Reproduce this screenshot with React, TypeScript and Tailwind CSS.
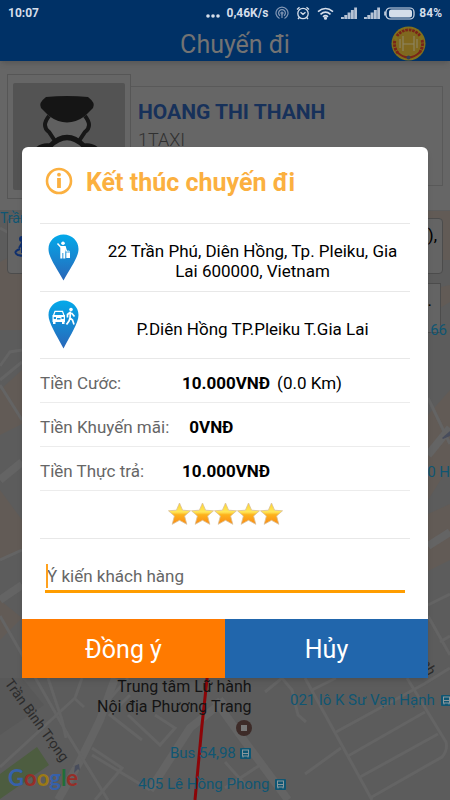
const streets = [
  "M0 616 L68 735 L108 800",
  "M0 767 L75 698 L82 678",
  "M48 678 L62 720 L66 738",
  "M92 755 L150 790 M92 748 L122 768 L95 800",
  "M74 698 L84 707",
  "M100 710 L128 678",
  "M142 740 L110 715 L130 695",
  "M155 715 L175 728 L160 745 L128 715",
  "M0 228 L22 240",
  "M0 366 L10 352 L22 350 M0 380 L22 362 M0 385 L22 420",
  "M0 560 L22 550",
  "M305 678 L372 800",
  "M312 690 L336 678",
  "M336 732 L424 684 L450 668",
  "M348 756 L425 712",
  "M360 777 L438 734",
  "M370 798 L442 757 Q448 750 446 742 L407 678",
  "M305 774 L341 748",
  "M265 692 L282 678 L292 690 L298 715 L306 722",
  "M225 762 L250 790 M225 788 L260 765",
  "M428 398 L450 444",
  "M428 605 L450 594",
  "M428 616 L450 655",
  "M440 642 L450 636",
];

const wideStreets = [
  "M115 678 L100 720 L78 765 L58 800",
  "M150 790 L190 728 L225 700",
  "M215 700 L240 735 L288 800",
  "M0 480 L22 462 M0 600 L22 585",
  "M428 455 L450 428",
  "M428 546 L450 532",
];

const MapCanvas = () => (
  <svg
    className="absolute inset-0 h-full w-full"
    viewBox="0 210 450 590"
    preserveAspectRatio="xMidYMax slice"
    aria-hidden="true"
  >
    <rect y="210" width="450" height="590" fill="#5c5c5c" />
    <path d="M0 262 L22 250 V330 H0 Z M0 390 L22 370 V424 L0 435 Z M0 490 L22 520 V550 L0 560 Z M0 600 L22 618 L0 640 Z" fill="#625b56" />
    <path d="M428 415 L450 390 V465 L428 500 Z M428 514 L450 504 V560 L428 571 Z M400 211 H450 V260 H428 Z M428 290 L450 285 V302 L428 315 Z" fill="#625b56" />
    <path d="M0 678 H22 L44 705 L0 735 Z" fill="#585858" />
    <path d="M0 774 L37 747 L49 765 L0 799 Z" fill="#4d5d40" />
    {wideStreets.map((d) => (
      <path key={d} d={d} stroke="#646464" strokeWidth="8" fill="none" />
    ))}
    {streets.map((d) => (
      <path key={d} d={d} stroke="#646464" strokeWidth="3" fill="none" />
    ))}
    <path d="M208 670 L202 725 L195 800" stroke="#8c0508" strokeWidth="3" fill="none" />
    <path d="M74 773 L75 766 L72 767 L79 764 L80 771 L78 769 Z M442 438 L450 431 V436 L443 439 Z" fill="#484d5c" />
  </svg>
);

const BusStop = () => (
  <svg className="shrink-0" width="11" height="11" viewBox="0 0 11 11" aria-hidden="true">
    <rect width="11" height="11" rx="1" fill="#0f5673" />
    <rect x="2.5" y="2" width="6" height="6" fill="#0f5673" stroke="#8a979c" />
    <path d="M3 5.5 H8 M3 8 V9.5 M8 8 V9.5" stroke="#8a979c" />
  </svg>
);

const SignalBars = () => (
  <svg width="16" height="12" viewBox="0 0 16 12" fill="#b6c3d5">
    <path d="M0 10 H2.9 V12 H0 Z M3.3 8 H6.2 V12 H3.3 Z M6.6 5.6 H9.5 V12 H6.6 Z M9.9 3 H12.8 V12 H9.9 Z M13.2 0.5 H16 V12 H13.2 Z" />
  </svg>
);

const StatusBar = () => (
  <div className="relative z-20 flex h-6 items-center bg-[#003166] pl-2 pr-2 pt-0.5 text-xs font-bold text-[#d5deea]">
    <span>10:07</span>
    <div className="ml-auto flex items-center gap-[7px]">
      <svg width="14" height="10" viewBox="0 0 14 10" fill="currentColor">
        <circle cx="2" cy="8" r="1.8" />
        <circle cx="7" cy="8" r="1.8" />
        <circle cx="12" cy="8" r="1.8" />
      </svg>
      <span>0,46K/s</span>
      <svg width="14" height="14" viewBox="0 0 14 14" fill="none" stroke="#8398b5" strokeWidth="1.2">
        <path d="M4.5 12.5 A6 6 0 1 1 9.5 12.5" />
        <path d="M5 9.8 A3.4 3.4 0 1 1 9 9.8" />
        <circle cx="7" cy="7" r="1" />
        <path d="M7 8 V12" />
      </svg>
      <svg width="14" height="14" viewBox="0 0 14 14" fill="none" stroke="currentColor" strokeWidth="1.3">
        <circle cx="7" cy="7.5" r="5.2" />
        <path d="M4.5 6.2 L7 8.3 L9.5 6.2 M1 3.5 L3.5 1.2 M13 3.5 L10.5 1.2 M3.3 11.5 L2 13 M10.7 11.5 L12 13" />
      </svg>
      <svg width="17" height="13" viewBox="0 0 17 13" fill="none" stroke="currentColor" strokeWidth="1.6">
        <path d="M1 4.7 Q8.5 -1.7 16 4.7 M3.5 7.3 Q8.5 3 13.5 7.3 M6 9.8 Q8.5 7.5 11 9.8" />
        <circle cx="8.5" cy="11.2" r=".8" />
      </svg>
      <SignalBars />
      <div className="flex items-center gap-1">
        <SignalBars />
        <svg width="31" height="13" viewBox="0 0 31 13">
          <rect x="2" y="1" width="28" height="11" rx="4" fill="none" stroke="currentColor" strokeWidth="1.2" />
          <rect x="5" y="2.5" width="23" height="8" rx="2.5" fill="currentColor" />
          <path d="M1 4.5 V8.5" stroke="currentColor" strokeWidth="1.5" />
        </svg>
        <span>84%</span>
      </div>
    </div>
  </div>
);

const BrandBadge = () => (
  <svg width="35" height="35" viewBox="0 0 35 35" aria-hidden="true">
    <circle cx="17.5" cy="17.5" r="17" fill="#80701c" />
    <path d="M7 27 A14 14 0 0 1 4 14 M6 10 A14 14 0 0 1 29 10 M31 14 A14 14 0 0 1 28 27" fill="none" stroke="#7a2418" strokeWidth="3" strokeDasharray="2.6 .8" />
    <path d="M6 26 Q17.5 37 29 26" stroke="#7a2418" strokeWidth="2" fill="none" />
    <circle cx="17.5" cy="17.5" r="12" fill="#80681f" />
    <circle cx="17.5" cy="31.5" r="2" fill="#323e55" />
    <path d="M12 10 V25 M23 10 V25 M12 18 H23 M9 13 V22 M26 13 V22" stroke="#8d8664" strokeWidth="1.1" />
  </svg>
);

const DriverAvatar = () => (
  <svg className="w-full" viewBox="0 0 112 107" aria-hidden="true">
    <rect width="112" height="107" rx="2" fill="#535353" />
    <path d="M36 32 L33 43 L42 58 H66 L75 43 L72 32 Z" fill="#606060" />
    <path d="M36 33 Q28 43 36 49 L42 58 M72 33 Q80 43 72 49 L66 58" stroke="#171717" strokeWidth="4" fill="none" />
    <path d="M33 14 Q54 12 75 14 Q83 20 80 25 L72 33 Q54 46 36 33 L28 25 Q25 20 33 14 Z" fill="#151515" />
    <path d="M38 65 Q54 43 70 65 Z" fill="#606060" />
    <path d="M25 66 Q30 62 37 63 Q54 46 71 63 Q78 62 83 66" stroke="#151515" strokeWidth="5" fill="none" />
  </svg>
);

const PickupPin = () => (
  <svg width="31" height="47" viewBox="0 0 31 47" aria-hidden="true">
    <defs>
      <linearGradient id="pin" x1="0" y1="0" x2="0" y2="1">
        <stop offset="0" stopColor="#03a9ea" />
        <stop offset="1" stopColor="#2a66b8" />
      </linearGradient>
    </defs>
    <path d="M15.5 0.5 C7 .5 .5 7 .5 15 C.5 23 8 33 15.5 46.5 C23 33 30.5 23 30.5 15 C30.5 7 24 .5 15.5 .5 Z" fill="url(#pin)" />
    <circle cx="15" cy="9.2" r="1.8" fill="#fff" />
    <path d="M9.5 9.5 L12.5 12.7 H17 L18.5 17.5" stroke="#fff" strokeWidth="1.5" fill="none" />
    <path d="M12.3 12 H17.3 V24.5 H15.3 V19 H14.4 V24.5 H12.3 Z" fill="#fff" />
    <path d="M18.3 18.5 H22 V24 H18.3 Z" fill="#fff" />
    <path d="M19.2 18.5 V17 H21.2 V18.5" fill="none" stroke="#fff" strokeWidth=".8" />
  </svg>
);

const DropoffPin = () => (
  <svg width="31" height="49" viewBox="0 0 31 49" aria-hidden="true">
    <path d="M15.5 0.5 C7 .5 .5 7 .5 15 C.5 23 8 34 15.5 48.5 C23 34 30.5 23 30.5 15 C30.5 7 24 .5 15.5 .5 Z" fill="url(#pin)" />
    <path d="M5.5 15.5 L7 11.3 H14.5 L16 15.5" stroke="#fff" strokeWidth="1.2" fill="none" />
    <path fillRule="evenodd" d="M4.5 15 H17 V22 H4.5 Z M5.8 17 V19 H8 V17 Z M13.5 17 V19 H15.7 V17 Z M9 18 V19.5 H12.5 V18 Z M5 22 H7.5 V24 H5 Z M14 22 H16.5 V24 H14 Z" fill="#fff" />
    <circle cx="23" cy="9.5" r="1.8" fill="#fff" />
    <path d="M22.5 11.5 L22 18 L24.5 20 L26 24.5 M22 18 L21 21 L18.5 24.5 M22 12.5 L19.5 14.5 V17.5 M23.5 13 L26.5 16.5" stroke="#fff" strokeWidth="1.7" fill="none" />
  </svg>
);

const Star = () => (
  <svg width="23" height="24" viewBox="0 0 23 24" aria-hidden="true">
    <defs>
      <linearGradient id="star" x1="0" y1="0" x2="0" y2="1">
        <stop offset="0" stopColor="#ffd52e" />
        <stop offset=".42" stopColor="#ffe75a" />
        <stop offset=".55" stopColor="#fdb31d" />
        <stop offset="1" stopColor="#fb8a14" />
      </linearGradient>
    </defs>
    <path
      d="M11.5 1 L14.6 8.2 L22.5 8.8 L16.6 14 L18.8 22.3 L11.5 18.3 L4.2 22.3 L6.4 14 L.5 8.8 L8.4 8.2 Z"
      fill="url(#star)"
      stroke="#d9bf96"
      strokeWidth=".8"
      strokeLinejoin="round"
    />
  </svg>
);

const fares = [
  { label: "Tiền Cước:", value: "10.000VNĐ", note: "(0.0 Km)" },
  { label: "Tiền Khuyến mãi:", value: "0VNĐ", note: "" },
  { label: "Tiền Thực trả:", value: "10.000VNĐ", note: "" },
];

const EndTripDialog = () => (
  <div className="absolute inset-0 z-10 flex items-center justify-center px-[22px] pt-6">
    <div
      role="dialog"
      aria-labelledby="dialog-title"
      className="w-full overflow-hidden rounded-t-md bg-white shadow-md"
    >
      <div className="px-[18px]">
        <div className="flex h-[77px] items-center gap-3 border-b border-[#e8e8e8] pb-2 pl-1 text-[#fbb040]">
          <svg width="30" height="30" viewBox="0 0 30 30" aria-hidden="true">
            <circle cx="15" cy="15" r="12" fill="none" stroke="currentColor" strokeWidth="2.6" />
            <circle cx="15" cy="8.7" r="1.9" fill="currentColor" />
            <path d="M13.1 12 H16.9 V22 H13.1 Z" fill="currentColor" />
          </svg>
          <h2 id="dialog-title" className="pt-1 text-[25px] font-bold leading-8">
            Kết thúc chuyến đi
          </h2>
        </div>

        <div className="flex h-[68px] items-center border-b border-[#e8e8e8] pl-2">
          <PickupPin />
          <p className="flex-1 pl-6 pr-2 pt-2 text-center text-[17px] leading-5 text-black">
            22 Trần Phú, Diên Hồng, Tp. Pleiku, Gia
            <br />
            Lai 600000, Vietnam
          </p>
        </div>
        <div className="flex h-[67px] items-center border-b border-[#e8e8e8] pl-2">
          <DropoffPin />
          <p className="flex-1 pl-6 pr-2 pt-2 text-center text-[17px] leading-5 text-black">
            P.Diên Hồng TP.Pleiku T.Gia Lai
          </p>
        </div>

        <dl>
          {fares.map((fare) => (
            <div key={fare.label} className="flex h-11 items-center border-b border-[#ececec] pt-2 text-[17px]">
              <dt className="min-w-[142px] pr-5 text-[#666]">{fare.label}</dt>
              <dd className="flex gap-[7px] text-black">
                <b>{fare.value}</b>
                {fare.note && <span>{fare.note}</span>}
              </dd>
            </div>
          ))}
        </dl>

        <div role="img" aria-label="5 sao" className="flex h-12 items-center justify-center border-b border-[#e8e8e8]">
          <Star />
          <Star />
          <Star />
          <Star />
          <Star />
        </div>

        <div className="px-[5px] pb-[26px] pt-[21px]">
          <div className="relative border-b-[3px] border-[#ff9d00]">
            <input
              type="text"
              aria-label="Ý kiến khách hàng"
              placeholder="Ý kiến khách hàng"
              className="block h-[30px] w-full pl-0.5 pt-0.5 text-[17px] text-black outline-none placeholder:text-[#666]"
            />
            <span className="absolute left-px top-1 h-6 w-0.5 bg-[#ffa21f]"></span>
          </div>
        </div>
      </div>

      <div className="grid grid-cols-2 text-[25px] text-white">
        <button className="h-[59px] cursor-pointer bg-[#ff7a00] pt-1">Đồng ý</button>
        <button className="h-[59px] cursor-pointer bg-[#2166ac] pt-1">Hủy</button>
      </div>
    </div>
  </div>
);

const App = () => {
  return (
    <div className="relative flex min-h-screen flex-col overflow-hidden bg-[#666] font-['Roboto','Noto_Sans',sans-serif]">
      <StatusBar />
      <header className="relative flex h-[37px] items-center justify-center bg-[#003166] pl-5 pt-1 shadow-md">
        <h1 className="text-[25px] text-[#737373]">Chuyến đi</h1>
        <div className="absolute right-6 top-0.5">
          <BrandBadge />
        </div>
      </header>

      <section className="flex h-[149px] items-start px-[7px] pt-[13px]">
        <div className="h-[125px] w-[124px] border border-[#565656] px-[5px] pt-2">
          <DriverAvatar />
        </div>
        <div className="mt-3 h-[100px] flex-1 border border-l-0 border-[#595959] px-[7px] pt-[9px]">
          <p className="text-[21px] font-bold leading-8 text-[#17315a]">HOANG THI THANH</p>
          <p className="text-[18px] font-light leading-6 text-[#303030]">1TAXI</p>
        </div>
      </section>

      <main className="relative min-h-[590px] flex-1">
        <MapCanvas />
        <div className="relative flex flex-col gap-[9px] px-[7px] pt-2">
          <div className="flex h-14 items-center justify-between rounded border border-[#4c4c4c] bg-[#646464] px-[5px]">
            <svg width="24" height="24" viewBox="0 0 24 24" fill="none" stroke="#10306e" strokeWidth="2">
              <circle cx="9" cy="5" r="2" fill="#10306e" />
              <path d="M9 8 V19 M9 9 L6 14 M7 15 Q-1 18 5 21 Q12 23 20 20" />
            </svg>
            <span className="self-start pt-1 text-[17px] text-black">),</span>
          </div>
          <div className="ml-10 mr-0.5 flex h-[50px] justify-end border border-[#4c4c4c] bg-[#646464] pr-2 text-[17px] text-black">
            <span className="pt-1">.</span>
          </div>
        </div>

        {/* place names pinned on the map */}
        <div className="text-[15px] leading-5 text-[#0f5673]">
          <span className="absolute left-0 -top-0.5 text-sm">Trần</span>
          <span className="absolute right-[3px] top-[110px]">66</span>
          <span className="absolute right-0 top-[252px] whitespace-nowrap">90 H</span>
          <span className="absolute bottom-[90px] left-[290px] flex items-center gap-1.5 whitespace-nowrap">
            021 lô K Sư Vạn Hạnh <BusStop />
          </span>
          <span className="absolute bottom-[37px] left-[170px] flex items-center gap-1 whitespace-nowrap">
            Bus 54,98 <BusStop />
          </span>
          <span className="absolute bottom-[6px] left-[138px] flex items-center gap-1.5 whitespace-nowrap">
            405 Lê Hồng Phong <BusStop />
          </span>
        </div>
        <p className="absolute bottom-[83px] left-[97px] whitespace-nowrap text-right text-base leading-5 text-[#141414]">
          Trung tâm Lữ hành
          <br />
          Nội địa Phương Trang
        </p>
        <span className="absolute bottom-16 left-[236px] flex size-4 items-center justify-center rounded-full bg-[#3d2b28]">
          <span className="size-1.5 bg-[#777]"></span>
        </span>
        <span className="absolute bottom-[70px] left-[-12px] rotate-[54deg] whitespace-nowrap text-sm text-[#2b2b2b]">
          Trần Bình Trọng
        </span>
        <span className="absolute bottom-[123px] left-[421px] rotate-[60deg] text-sm text-[#2b2b2b]">nh</span>
        <span className="absolute bottom-1.5 left-2 flex font-['Lato',sans-serif] text-[22px] font-bold leading-8 text-[#3661ab]">
          G<span className="text-[#962e27]">o</span>
          <span className="text-[#9c7a14]">o</span>g<span className="text-[#1f6e38]">l</span>
          <span className="text-[#962e27]">e</span>
        </span>
      </main>

      <EndTripDialog />
    </div>
  );
};

export default App;
